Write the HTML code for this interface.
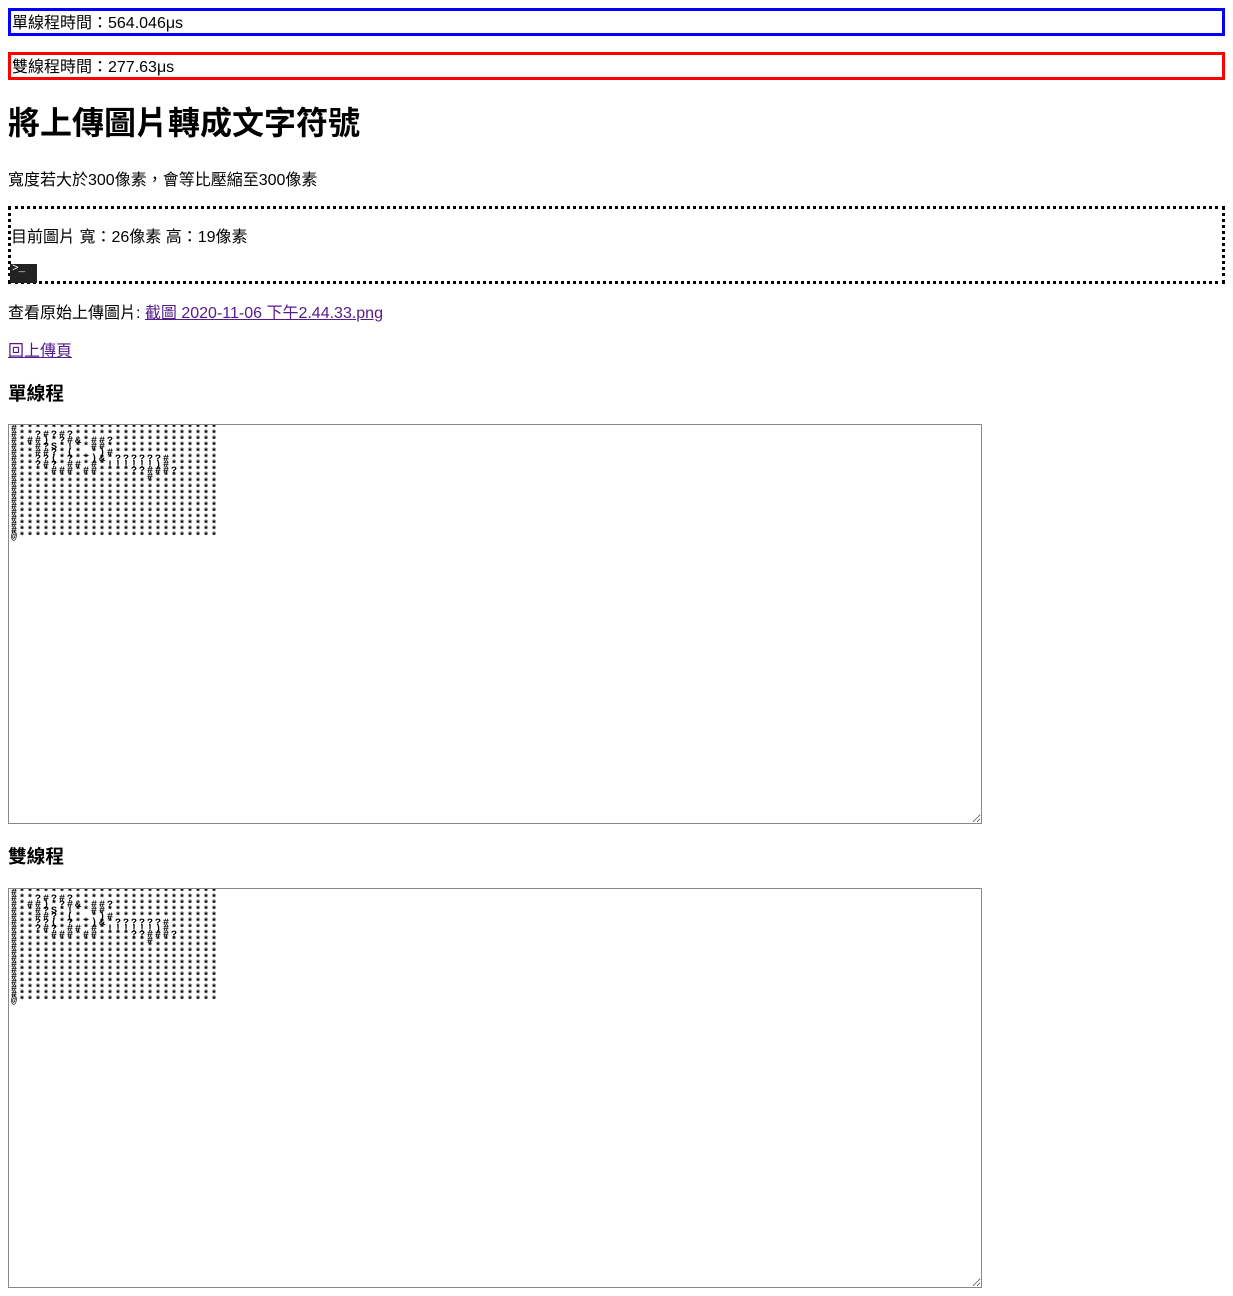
<!DOCTYPE html>
<html><head><meta charset="utf-8"><style>
body{margin:8px;font-family:"Liberation Sans","Noto Sans CJK TC",sans-serif;font-size:16px;color:#000;background:#fff}
.b{border:3px solid;height:20px;padding-top:2px;line-height:22px;font-size:16px;padding-left:1px}
h1{font-size:32px;margin:22px 0 0;height:42px;line-height:42px;font-family:"Liberation Sans","Noto Sans CJK TC",sans-serif}
p{margin:0}
a{color:#551a8b}
textarea{display:block;width:974px;height:400px;box-sizing:border-box;border:1px solid #888;margin:0;padding:2px;font-family:"Liberation Mono",monospace;font-size:10px;font-weight:bold;line-height:6px;letter-spacing:2px;resize:both;overflow:hidden}
h3{font-size:18.7px;margin:0;height:22px;line-height:22px}
</style></head><body>
<div class="b" style="border-color:#00f">單線程時間：564.046μs</div>
<div class="b" style="border-color:#f00;margin-top:16px">雙線程時間：277.63μs</div>
<h1>將上傳圖片轉成文字符號</h1>
<p style="margin-top:26px;height:22px;line-height:22px">寬度若大於300像素，會等比壓縮至300像素</p>
<div style="border:3px dotted #000;margin-top:14px;height:72px;position:relative">
<div style="position:absolute;top:18px;left:0;line-height:22px">目前圖片 寬：26像素 高：19像素</div>
<div style="position:absolute;top:55px;left:-1px;width:27px;height:19px;background:#222;color:#fff;font-size:11px;line-height:11px;font-family:'Liberation Mono',monospace;padding-left:2px;box-sizing:border-box">&gt;_</div>
</div>
<p style="margin-top:19px;height:22px;line-height:22px">查看原始上傳圖片: <a href="#">截圖 2020-11-06 下午2.44.33.png</a></p>
<p style="margin-top:16px;height:22px;line-height:22px"><a href="#">回上傳頁</a></p>
<h3 style="margin-top:20px">單線程</h3>
<textarea style="margin-top:19px">#*************************
#**?#?#?******************
#*##)*?#&amp;*##?*************
#**#?S*!**##**************
#**##?*(*_*)#*************
#**??(*?**)&amp;*??????#******
#**?#?*##*#*!!!!!!)#******
#****###*##****??###?*****
#****************#********
#*************************
#*************************
#*************************
#*************************
#*************************
#*************************
#*************************
#*************************
#*************************
@*************************</textarea>
<h3 style="margin-top:22px">雙線程</h3>
<textarea style="margin-top:20px">#*************************
#**?#?#?******************
#*##)*?#&amp;*##?*************
#**#?S*!**##**************
#**##?*(*_*)#*************
#**??(*?**)&amp;*??????#******
#**?#?*##*#*!!!!!!)#******
#****###*##****??###?*****
#****************#********
#*************************
#*************************
#*************************
#*************************
#*************************
#*************************
#*************************
#*************************
#*************************
@*************************</textarea>
</body></html>
